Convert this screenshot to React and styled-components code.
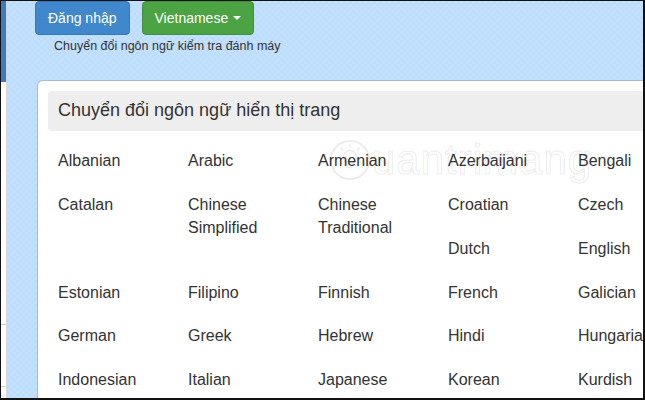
import React from "react";
import styled, { createGlobalStyle } from "styled-components";

const languages = [
    "Albanian", "Arabic", "Armenian", "Azerbaijani", "Bengali", "Bulgarian",
    "Catalan", "Chinese Simplified", "Chinese Traditional", "Croatian", "Czech", "Danish",
    "Dutch", "English", "Esperanto",
    "Estonian", "Filipino", "Finnish", "French", "Galician", "Georgian",
    "German", "Greek", "Hebrew", "Hindi", "Hungarian", "Icelandic",
    "Indonesian", "Italian", "Japanese", "Korean", "Kurdish", "Latvian",
];

export default function App() {
    return (
        <>
            <GlobalStyle />
            <Frame>
                <Sidebar>
                    <SidebarTop />
                    <SidebarRule $top={242} />
                    <SidebarRule $top={61} />
                </Sidebar>
                <Main>
                    <Toolbar>
                        <Button $variant="primary">Đăng nhập</Button>
                        <Button $variant="success">
                            Vietnamese <Caret />
                        </Button>
                    </Toolbar>
                    <Hint>Chuyển đổi ngôn ngữ kiểm tra đánh máy</Hint>
                    <Card>
                        <CardHeader>Chuyển đổi ngôn ngữ hiển thị trang</CardHeader>
                        <LangList>
                            {languages.map((lang) => (
                                <LangItem key={lang}>{lang}</LangItem>
                            ))}
                        </LangList>
                        <Watermark>
                            <svg width="44" height="44" viewBox="0 0 46 46">
                                <circle cx="23" cy="23" r="20" fill="none" stroke="rgba(0,0,0,0.08)" strokeWidth="2" />
                                <circle cx="23" cy="20" r="7" fill="none" stroke="rgba(0,0,0,0.08)" strokeWidth="1.5" />
                                <path d="M20 28h6M21 31h4M23 6v4M13 10l3 3M33 10l-3 3" stroke="rgba(0,0,0,0.08)" strokeWidth="1.5" />
                            </svg>
                            <WatermarkText>uantrimang</WatermarkText>
                        </Watermark>
                    </Card>
                </Main>
            </Frame>
        </>
    );
}

const GlobalStyle = createGlobalStyle`
    html, body {
        margin: 0;
        padding: 0;
        overflow: hidden;
    }
    body {
        font-family: "Liberation Sans", Arial, sans-serif;
        color: #333;
    }
`;

const Frame = styled.div`
    width: 645px;
    height: 400px;
    box-sizing: border-box;
    border-style: solid;
    border-color: #111;
    border-width: 1px 2px 2px 1px;
    display: flex;
    overflow: hidden;
    background: #fff;
`;

const Sidebar = styled.div`
    width: 5px;
    flex-shrink: 0;
    border-right: 1px solid #d6d6d6;
    display: flex;
    flex-direction: column;
`;

const SidebarTop = styled.div`
    height: 81px;
    background: #3a7cc4;
`;

const SidebarRule = styled.div`
    margin-top: ${(p) => p.$top}px;
    border-top: 1px solid #d0d0d0;
`;

const Main = styled.div`
    flex: 1;
    min-width: 0;
    overflow: hidden;
    background-color: #bedcfb;
    background-image: conic-gradient(
        #c3e0fd 25%, transparent 0 50%, #c3e0fd 0 75%, transparent 0
    );
    background-size: 6px 6px;
`;

const Toolbar = styled.div`
    display: flex;
    gap: 12px;
    padding-left: 28px;
`;

const Button = styled.button`
    font-family: "Liberation Sans", Arial, sans-serif;
    font-size: 14px;
    line-height: 20px;
    padding: 6px 12px;
    border-radius: 4px;
    color: #fff;
    display: flex;
    align-items: center;
    gap: 5px;
    cursor: pointer;
    background: ${(p) => (p.$variant === "success" ? "#4ca343" : "#4088cb")};
    border: 1px solid ${(p) => (p.$variant === "success" ? "#40913a" : "#3479ba")};
`;

const Caret = styled.span`
    width: 0;
    height: 0;
    border-left: 4px solid transparent;
    border-right: 4px solid transparent;
    border-top: 4px solid #fff;
`;

const Hint = styled.div`
    margin: 2px 0 0 47px;
    font-size: 12.5px;
    line-height: 18px;
    color: #333;
`;

const Card = styled.div`
    position: relative;
    margin: 25px 0 0 30px;
    width: 820px;
    padding: 10px;
    background: #fff;
    border: 1px solid #a3bcd5;
    border-radius: 6px 0 0 0;
    height: 400px;
`;

const CardHeader = styled.div`
    height: 40px;
    line-height: 39px;
    padding: 0 10px;
    background: #eeeeee;
    border-radius: 4px;
    font-size: 18px;
    color: #333;
`;

const LangList = styled.div`
    padding-top: 19px;
    &::after {
        content: "";
        display: block;
        clear: both;
    }
`;

const LangItem = styled.div`
    float: left;
    width: 130px;
    box-sizing: border-box;
    padding: 0 10px;
    margin-bottom: 21px;
    font-size: 16px;
    line-height: 22.86px;
    color: #333;
`;

const Watermark = styled.div`
    position: absolute;
    left: 290px;
    top: 55px;
    display: flex;
    align-items: center;
    pointer-events: none;
`;

const WatermarkText = styled.span`
    font-family: "Liberation Sans", Arial, sans-serif;
    font-size: 42px;
    letter-spacing: 1px;
    color: transparent;
    -webkit-text-stroke: 1.5px rgba(0, 0, 0, 0.07);
`;
